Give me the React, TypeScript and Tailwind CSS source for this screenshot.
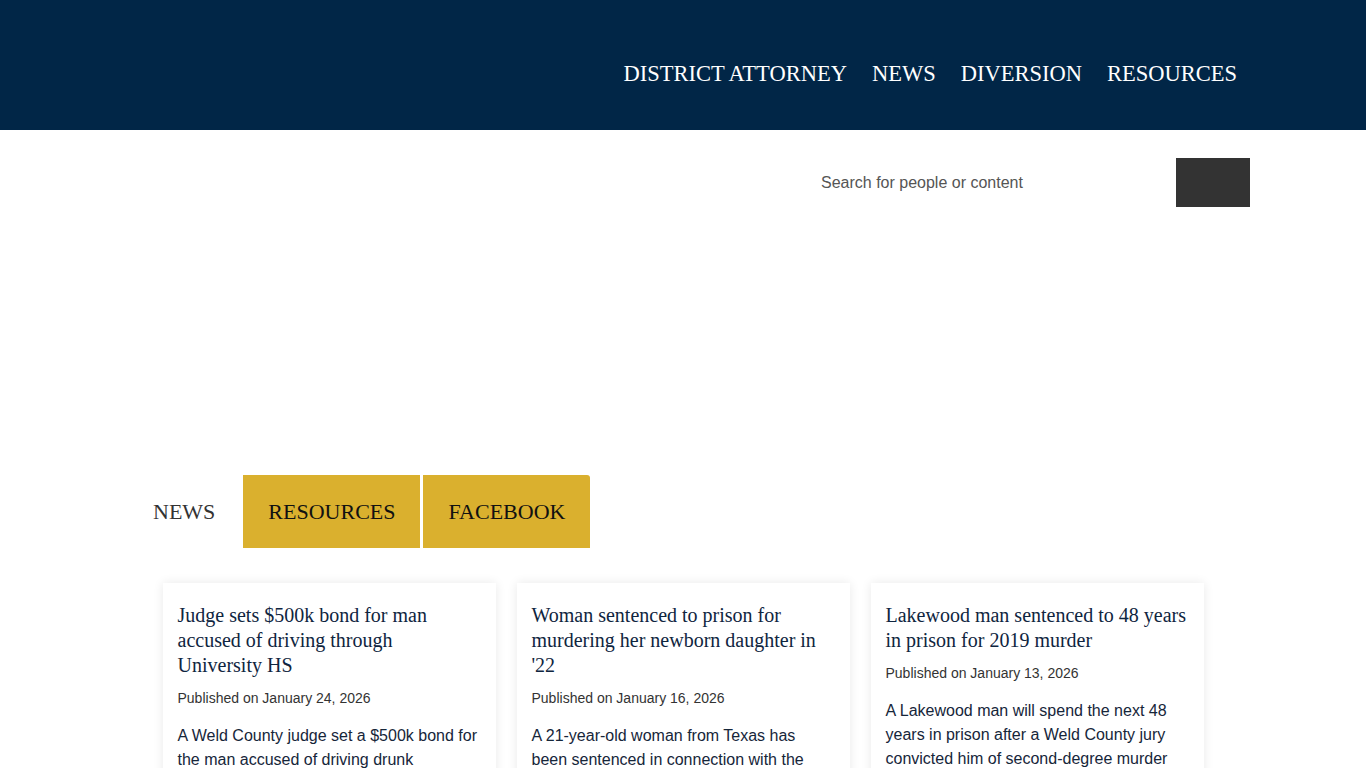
import React from 'react';

const serif = "font-['Liberation_Serif','Times_New_Roman',serif]";
const sans = "font-['Liberation_Sans',Arial,sans-serif]";

const navItems = ['DISTRICT ATTORNEY', 'NEWS', 'DIVERSION', 'RESOURCES'];

const posts = [
  {
    title: 'Judge sets $500k bond for man accused of driving through University HS',
    date: 'Published on January 24, 2026',
    body: 'A Weld County judge set a $500k bond for the man accused of driving drunk Thursday night through the halls of University High School.',
  },
  {
    title: "Woman sentenced to prison for murdering her newborn daughter in '22",
    date: 'Published on January 16, 2026',
    body: 'A 21-year-old woman from Texas has been sentenced in connection with the death of her newborn daughter in 2022.',
  },
  {
    title: 'Lakewood man sentenced to 48 years in prison for 2019 murder',
    date: 'Published on January 13, 2026',
    body: 'A Lakewood man will spend the next 48 years in prison after a Weld County jury convicted him of second-degree murder for the 2019 killing.',
  },
];

export default function App() {
  return (
    <div className="min-h-screen bg-white">
      {/* Header */}
      <header className="h-[130px] bg-[#012647]">
        <nav className={`flex justify-end pt-[61px] pr-[116px] ${serif}`}>
          {navItems.map((item) => (
            <a
              key={item}
              href="#"
              className="px-[12.5px] text-[22.5px] leading-[26px] text-white last:pr-[13px]"
            >
              {item}
            </a>
          ))}
        </nav>
      </header>

      {/* Search */}
      <div className="mt-[28px] flex justify-end pr-[116px]">
        <div className="flex h-[49px]">
          <input
            type="text"
            placeholder="Search for people or content"
            className={`w-[366px] px-[11px] text-[16px] text-[#333] outline-none placeholder:text-[#555] ${sans}`}
          />
          <button className="w-[74px] bg-[#333333]" aria-label="Search" />
        </div>
      </div>

      {/* Tabs */}
      <div className={`mt-[268px] flex gap-[3px] pl-[128px] ${serif}`}>
        <button className="h-[73px] px-[25px] text-[22px] text-[#333]">NEWS</button>
        <button className="h-[73px] bg-[#dab02e] px-[25px] text-[22px] text-[#111]">RESOURCES</button>
        <button className="h-[73px] rounded-tr-[3px] bg-[#dab02e] px-[25px] text-[22px] text-[#111]">
          FACEBOOK
        </button>
      </div>

      {/* News cards */}
      <div className="mx-auto mt-[35px] grid w-[1041px] grid-cols-3 gap-[21px]">
        {posts.map((p) => (
          <article
            key={p.title}
            className="h-[260px] overflow-hidden bg-white pt-[20px] pr-[17px] pl-[15px] shadow-[0_0_10px_rgba(0,0,0,0.09)]"
          >
            <h3 className={`text-[20px] leading-[25px] text-[#0f2540] ${serif}`}>{p.title}</h3>
            <p className={`mt-[10px] text-[14px] leading-[20px] text-[#333] ${sans}`}>{p.date}</p>
            <p className={`mt-[16px] text-[16px] leading-[24px] text-[#16263a] ${sans}`}>{p.body}</p>
          </article>
        ))}
      </div>
    </div>
  );
}
